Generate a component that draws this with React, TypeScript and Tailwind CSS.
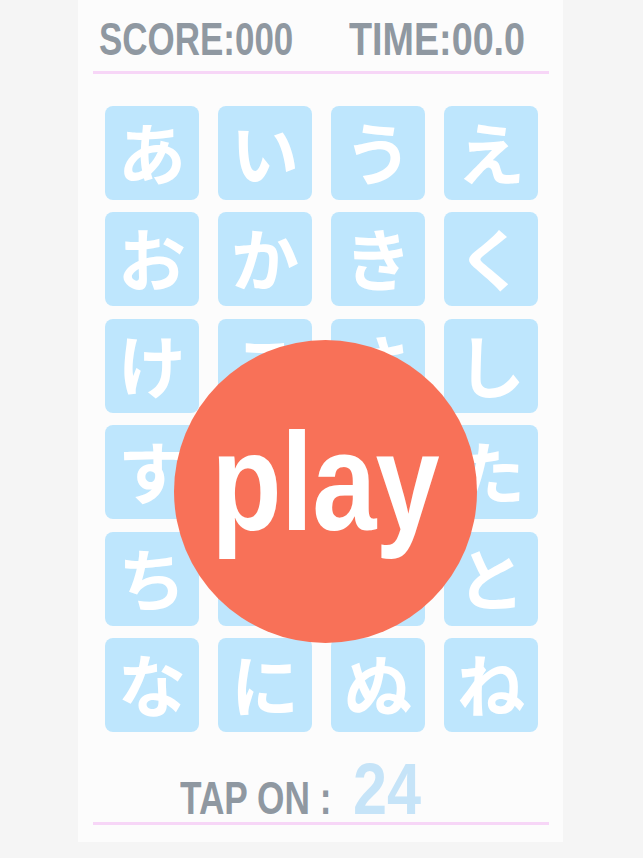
import React from "react";

const chars = [
  "あ", "い", "う", "え",
  "お", "か", "き", "く",
  "け", "こ", "さ", "し",
  "す", "せ", "そ", "た",
  "ち", "つ", "て", "と",
  "な", "に", "ぬ", "ね",
];

export default function App() {
  return (
    <div className="w-[643px] h-[858px] bg-[#f5f5f5] overflow-hidden">
      <div className="relative ml-[78px] w-[485px] h-[842px] bg-[#fcfcfc] flex flex-col">
        {/* header */}
        <div className="flex pt-[16px] h-[62px] font-['Liberation_Sans',sans-serif] font-bold text-[46px] leading-none text-[#8f98a1]">
          <div className="ml-[21px] w-[250px]">
            <span className="inline-block whitespace-nowrap origin-left scale-x-[0.76]">SCORE:000</span>
          </div>
          <div className="w-[200px]">
            <span className="inline-block whitespace-nowrap origin-left scale-x-[0.82]">TIME:00.0</span>
          </div>
        </div>
        <div className="mt-[9px] ml-[15px] w-[456px] h-[3px] bg-[#f7d6f7]" />

        {/* grid */}
        <div className="mt-[32px] ml-[27px] grid grid-cols-[repeat(4,94px)] gap-x-[19px] gap-y-[12.4px]">
          {chars.map((c) => (
            <div
              key={c}
              className="w-[94px] h-[94px] rounded-[8px] bg-[#bee6fd] flex items-center justify-center text-white text-[68px] leading-none font-bold font-['Noto_Sans_CJK_JP',sans-serif]"
            >
              <span className="mt-[-4px]">{c}</span>
            </div>
          ))}
        </div>

        {/* tap on */}
        <div className="mt-[25px] flex items-baseline font-['Liberation_Sans',sans-serif] font-bold">
          <div className="ml-[102px] w-[173px] text-[47px] leading-none text-[#8f98a1]">
            <span className="inline-block whitespace-nowrap origin-left scale-x-[0.75]">TAP ON :</span>
          </div>
          <div className="w-[90px] text-[72px] leading-[65px] text-[#c6e4f8]">
            <span className="inline-block whitespace-nowrap origin-left scale-x-[0.85]">24</span>
          </div>
        </div>
        <div className="ml-[15px] w-[456px] h-[3px] bg-[#f7d6f7]" />

        {/* play button */}
        <div className="absolute left-[96px] top-[340px] w-[303px] h-[303px] rounded-full bg-[#f87158] flex items-center justify-center">
          <span className="mb-[20px] inline-block text-white text-[139px] leading-none font-bold font-['Liberation_Sans',sans-serif] scale-x-[0.83] tracking-[-1px]">
            play
          </span>
        </div>
      </div>
    </div>
  );
}
